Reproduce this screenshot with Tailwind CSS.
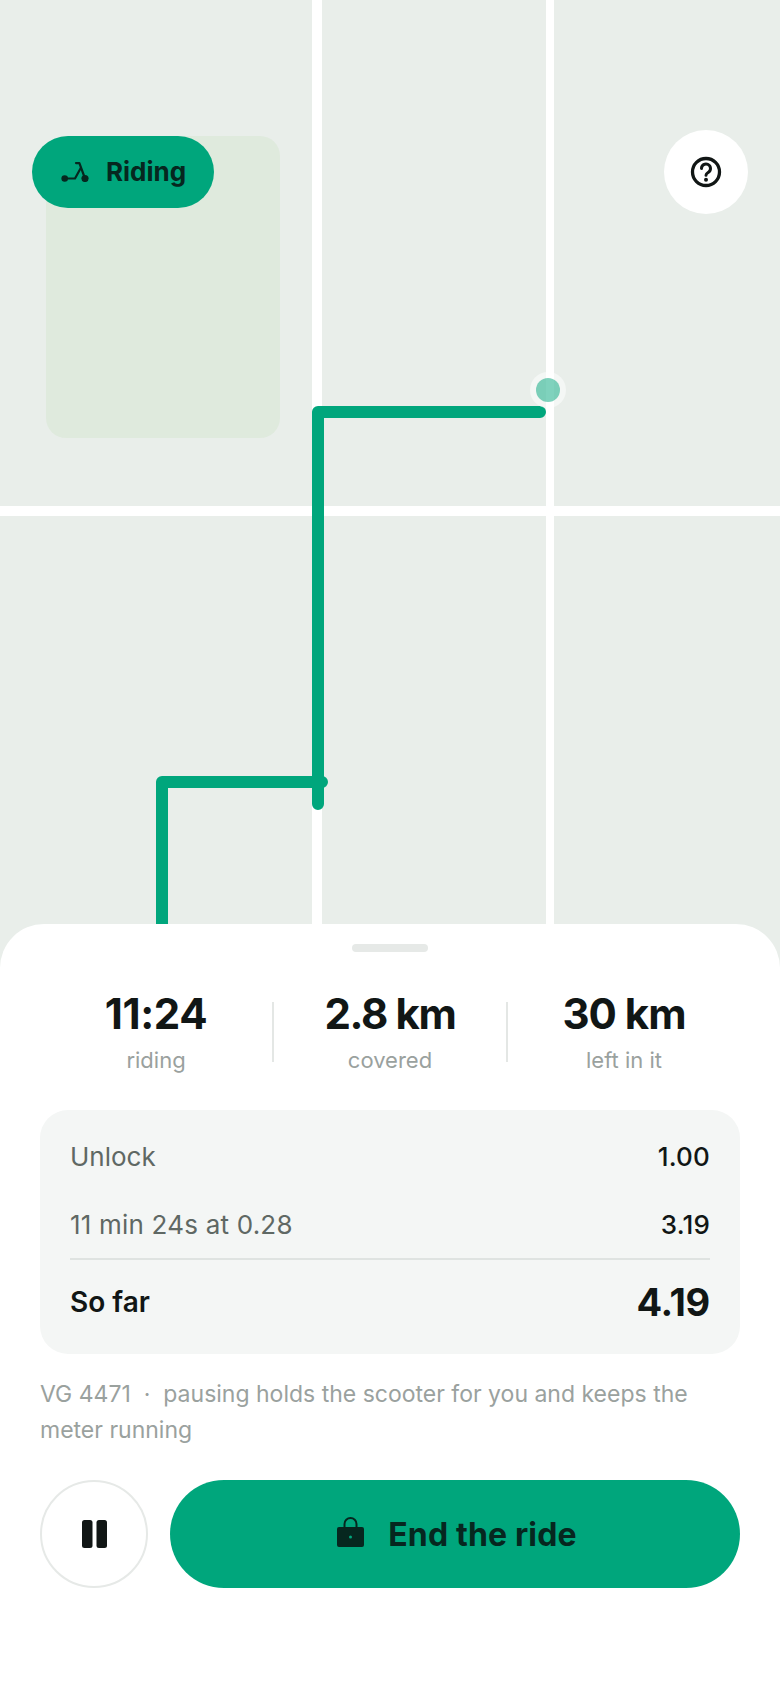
<!DOCTYPE html>
<html lang="en">
  <head>
    <meta charset="UTF-8" />
    <meta name="viewport" content="width=device-width, initial-scale=1.0" />
    <script src="https://cdn.jsdelivr.net/npm/@tailwindcss/browser@4"></script>
    <title>Riding</title>
  </head>
  <body class="w-[780px] h-[1688px] overflow-hidden bg-white font-['Inter',sans-serif] text-[#111615]">
    <!-- Map -->
    <div class="relative h-[968px] bg-[#e9eeea] overflow-hidden">
      <div class="absolute left-[46px] top-[136px] w-[234px] h-[302px] rounded-[20px] bg-[#dfeadd]"></div>

      <!-- roads -->
      <div class="absolute left-[312px] top-0 w-[10px] h-full bg-white"></div>
      <div class="absolute left-[546px] top-0 w-[8px] h-full bg-white"></div>
      <div class="absolute left-0 top-[506px] w-full h-[10px] bg-white"></div>

      <!-- route -->
      <svg class="absolute left-0 top-0" width="780" height="968" viewBox="0 0 780 968" fill="none">
        <path d="M162 968V782H322" stroke="#00a67c" stroke-width="12" stroke-linecap="round" stroke-linejoin="round" />
        <path d="M318 804V412H540" stroke="#00a67c" stroke-width="12" stroke-linecap="round" stroke-linejoin="round" />
        <circle cx="548" cy="390" r="18" fill="#ffffff" fill-opacity="0.5" />
        <circle cx="548" cy="390" r="12" fill="#00a67c" fill-opacity="0.5" />
      </svg>

      <!-- status pill -->
      <div class="absolute left-[32px] top-[136px] h-[72px] w-[182px] rounded-full bg-[#00a67c] flex items-center pl-[29px] gap-[17px]">
        <svg width="28" height="20" viewBox="0 0 28 20" fill="none" stroke="#06271f" stroke-width="2.2" stroke-linecap="round" stroke-linejoin="round">
          <path d="M15 1.100h3.400L24 16.500" />
          <path d="M3.700 16.500H14l5.500-10" />
          <circle cx="3.700" cy="16.500" r="3.300" fill="#06271f" stroke="none" />
          <circle cx="24" cy="16.500" r="3.600" fill="#06271f" stroke="none" />
        </svg>
        <span class="text-[26px] font-bold leading-none text-[#06271f]">Riding</span>
      </div>

      <!-- help -->
      <div class="absolute left-[664px] top-[130px] w-[84px] h-[84px] rounded-full bg-white flex items-center justify-center">
        <svg width="32" height="32" viewBox="0 0 32 32" fill="none" stroke="#111615" stroke-width="3.300" stroke-linecap="round" stroke-linejoin="round">
          <circle cx="16" cy="16" r="13.500" />
          <path d="M11.500 12.500a4.500 4.500 0 1 1 7 3.700c-1.500 1-2.500 1.500-2.500 3" stroke-width="3" />
          <circle cx="16" cy="23.700" r="2" fill="#111615" stroke="none" />
        </svg>
      </div>
    </div>

    <!-- Bottom sheet -->
    <div class="relative -mt-[44px] h-[764px] rounded-t-[44px] bg-white px-[40px] pt-[20px]">
      <div class="mx-auto w-[76px] h-[8px] rounded-full bg-[#e6e9e7]"></div>

      <div class="mt-[38px] flex">
        <div class="flex-1 text-center">
          <div class="text-[42px] font-bold leading-[48px] tracking-[-0.4px]">11:24</div>
          <div class="mt-[8px] text-[22px] leading-[28px] text-[#9aa19e]">riding</div>
        </div>
        <div class="w-[2px] h-[60px] my-[12px] bg-[#e4e7e5]"></div>
        <div class="flex-1 text-center">
          <div class="text-[42px] font-bold leading-[48px] tracking-[-1.4px]">2.8 km</div>
          <div class="mt-[8px] text-[22px] leading-[28px] text-[#9aa19e]">covered</div>
        </div>
        <div class="w-[2px] h-[60px] my-[12px] bg-[#e4e7e5]"></div>
        <div class="flex-1 text-center">
          <div class="text-[42px] font-bold leading-[48px] tracking-[-1px]">30 km</div>
          <div class="mt-[8px] text-[22px] leading-[28px] text-[#9aa19e]">left in it</div>
        </div>
      </div>

      <!-- Fare -->
      <div class="mt-[36px] h-[244px] rounded-[28px] bg-[#f4f6f5] px-[30px] pt-[30px]">
        <div class="flex justify-between items-center h-[32px]">
          <span class="text-[26px] text-[#5f6864]">Unlock</span>
          <span class="text-[26px] font-medium tracking-[0.2px]">1.00</span>
        </div>
        <div class="mt-[36px] flex justify-between items-center h-[32px]">
          <span class="text-[26px] tracking-[0.2px] text-[#5f6864]">11 min 24s at 0.28</span>
          <span class="text-[26px] font-medium tracking-[0.2px]">3.19</span>
        </div>
        <div class="mt-[18px] h-[2px] bg-[#dfe3e1]"></div>
        <div class="mt-[20px] flex justify-between items-center h-[44px]">
          <span class="text-[28px] font-semibold">So far</span>
          <span class="text-[38px] font-bold tracking-[-0.3px]">4.19</span>
        </div>
      </div>

      <p class="mt-[22px] text-[23px] leading-[36px] text-[#9aa19e]">VG 4471 &nbsp;·&nbsp; pausing holds the scooter for you and keeps the meter running</p>

      <!-- Actions -->
      <div class="mt-[32px] flex gap-[22px]">
        <button class="w-[108px] h-[108px] rounded-full border-2 border-[#e6e9e7] bg-white flex items-center justify-center">
          <svg width="25" height="28" viewBox="0 0 25 28" fill="#111615">
            <rect x="0" y="0" width="10.500" height="28" rx="2.500" />
            <rect x="14.500" y="0" width="10.500" height="28" rx="2.500" />
          </svg>
        </button>
        <button class="flex-1 h-[108px] pl-[4px] rounded-full bg-[#00a67c] flex items-center justify-center gap-[24px]">
          <svg class="mb-[4px]" width="27" height="30" viewBox="0 0 27 30">
            <path d="M7.500 11V7a6 6 0 0 1 12 0v4" fill="none" stroke="#06271f" stroke-width="2" />
            <path fill-rule="evenodd" d="M2 10h23a2 2 0 0 1 2 2v16a2 2 0 0 1-2 2H2a2 2 0 0 1-2-2V12a2 2 0 0 1 2-2zm11.500 8.500a1.500 1.500 0 1 0 0 3 1.500 1.500 0 0 0 0-3z" fill="#06271f" />
          </svg>
          <span class="mt-[2px] text-[32px] font-bold leading-none tracking-[0.15px] text-[#06271f]">End the ride</span>
        </button>
      </div>
    </div>
  </body>
</html>
